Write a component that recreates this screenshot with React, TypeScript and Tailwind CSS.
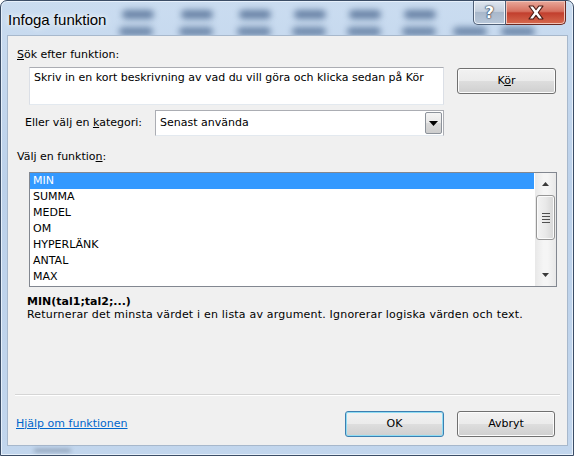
import React from 'react';

const functions = ['MIN', 'SUMMA', 'MEDEL', 'OM', 'HYPERLÄNK', 'ANTAL', 'MAX'];

// blurred spreadsheet cells seen through the glass title bar
const blobsTop = [121, 180, 238, 293, 348, 403];
const blobsBottom = [118, 178, 236, 291, 346, 401, 452, 500];

const Button = ({
  children,
  isDefault,
  className,
}: {
  children: React.ReactNode;
  isDefault?: boolean;
  className?: string;
}) => (
  <div
    className={`h-[26px] rounded-[3px] border flex items-center justify-center text-[11px] text-black bg-[linear-gradient(#f2f2f2_0%,#ebebeb_48%,#dddddd_52%,#cfcfcf_100%)] ${
      isDefault
        ? 'border-[#3c7fb1] shadow-[inset_0_0_0_1px_#8fdcf3]'
        : 'border-[#707070] shadow-[inset_0_0_0_1px_#fcfcfc]'
    } ${className ?? ''}`}
  >
    {children}
  </div>
);

const Triangle = ({ down }: { down?: boolean }) => (
  <svg width="7" height="4" viewBox="0 0 7 4">
    {down ? <path d="M0 0h7L3.5 4z" fill="#3b3b3b" /> : <path d="M0 4h7L3.5 0z" fill="#3b3b3b" />}
  </svg>
);

const App = () => {
  return (
    <div className="w-[574px] h-[456px] bg-white font-['DejaVu_Sans',Tahoma,sans-serif] text-[11px] text-black overflow-hidden">
      <div className="w-full h-full flex flex-col border border-[#3b4d66] rounded-t-[7px] bg-[linear-gradient(#cadcf0,#bcd1ea_40%,#c2d6ed)] shadow-[inset_0_0_0_1px_#e6f0fb]">
        {/* title bar */}
        <div className="h-[34px] flex items-start relative">
          <div className="absolute inset-0 pointer-events-none">
            {blobsTop.map((x, i) => (
              <div
                key={'t' + i}
                className="absolute top-[9px] h-[9px] w-[32px] rounded-full bg-[#34537e]/65 blur-[3px]"
                style={{ left: x }}
              />
            ))}
            {blobsBottom.map((x, i) => (
              <div
                key={'b' + i}
                className="absolute top-[26px] h-[9px] w-[34px] rounded-full bg-[#34537e]/60 blur-[3px]"
                style={{ left: x }}
              />
            ))}
          </div>
          <span className="relative ml-[7px] mt-[10px] font-['Liberation_Sans',Arial,sans-serif] text-[15px] leading-[18px] [text-shadow:0_0_8px_#fff,0_0_4px_#fff]">
            Infoga funktion
          </span>
          <div className="relative ml-auto mr-[7px] flex">
            <div className="w-[33px] h-[24px] border border-[#4f5f76] border-t-0 rounded-bl-[5px] bg-[linear-gradient(#dfe6ef,#c4cfdd_45%,#a9b8cb_50%,#b8c7d9)] shadow-[inset_0_0_0_1px_#eef3f9] flex items-center justify-center">
              <span className="font-bold text-[16px] leading-none text-white [text-shadow:0_0_1px_#2d3a4c,0_0_1px_#2d3a4c,0_0_2px_#2d3a4c]">
                ?
              </span>
            </div>
            <div className="w-[60px] h-[24px] border border-[#6b2820] border-t-0 border-l-0 rounded-br-[5px] bg-[linear-gradient(#e9a99b,#d6705f_45%,#c23f2e_52%,#d66a4f)] shadow-[inset_0_0_0_1px_#f1c3b8] flex items-center justify-center">
              <svg width="18" height="15" viewBox="0 0 16 14">
                <path
                  d="M1.5 1h4l2.5 3.4L10.5 1h4l-4.4 6 4.4 6h-4L8 9.6 5.5 13h-4l4.4-6z"
                  fill="#fff"
                  stroke="#4a1d16"
                  strokeWidth="1"
                  strokeLinejoin="round"
                />
              </svg>
            </div>
          </div>
        </div>

        {/* client area */}
        <div className="relative ml-[6px] mr-[5px] flex-1 border border-[#a7b8cc] bg-[#f0f0f0] flex flex-col">
          <div className="mt-[12px] ml-[9px] h-[13px] leading-[13px]">
            <span className="underline">S</span>ök efter funktion:
          </div>

          <div className="mt-[6px] ml-[21px] flex items-start">
            <div className="w-[415px] h-[38px] bg-white border border-[#abadb3] border-l-[#dbdfe6] border-r-[#dbdfe6] border-b-[#e3e9ef] px-[4px] pt-[3px] leading-[13px] whitespace-nowrap overflow-hidden">
              Skriv in en kort beskrivning av vad du vill göra och klicka sedan på Kör
            </div>
            <Button className="ml-[13px] mt-[1px] w-[99px]">
              <span>
                K<span className="underline">ö</span>r
              </span>
            </Button>
          </div>

          <div className="mt-[5px] ml-[17px] flex items-center h-[26px]">
            <div className="w-[130px] whitespace-nowrap">
              Eller välj en <span className="underline">k</span>ategori:
            </div>
            <div className="w-[289px] h-[26px] bg-white border border-[#abadb3] border-b-[#e3e9ef] flex items-center pl-[4px]">
              <span className="flex-1">Senast använda</span>
              <div className="w-[17px] h-[22px] mr-[1px] border border-[#8d939b] rounded-[2px] bg-[linear-gradient(#f4f4f4,#e8e8e8_50%,#d9d9d9_51%,#cdcdcd)] flex items-center justify-center">
                <svg width="9" height="5" viewBox="0 0 9 5">
                  <path d="M0 0h9L4.5 5z" fill="#000" />
                </svg>
              </div>
            </div>
          </div>

          <div className="mt-[14px] ml-[9px] h-[13px] leading-[13px]">
            Välj en funktio<span className="underline">n</span>:
          </div>

          <div className="mt-[9px] ml-[21px] w-[528px] h-[115px] bg-white border border-[#828790] flex">
            <div className="flex-1 pr-[1px]">
              {functions.map((f, i) => (
                <div
                  key={f}
                  className={`h-[16px] leading-[16px] pl-[3px] ${i === 0 ? 'bg-[#3399ff] text-white' : ''}`}
                >
                  {f}
                </div>
              ))}
            </div>
            <div className="w-[21px] h-full flex flex-col bg-[linear-gradient(90deg,#e8e8e8,#f5f5f5_40%,#f5f5f5_60%,#e8e8e8)]">
              <div className="h-[22px] flex items-center justify-center">
                <Triangle />
              </div>
              <div className="mx-[1px] h-[45px] border border-[#979797] rounded-[3px] bg-[linear-gradient(90deg,#f3f3f3,#e9e9e9_50%,#d6d6d6)] shadow-[inset_0_0_0_1px_#fbfbfb] flex flex-col items-center justify-center gap-[2px]">
                <div className="w-[8px] h-px bg-[#505050]" />
                <div className="w-[8px] h-px bg-[#505050]" />
                <div className="w-[8px] h-px bg-[#505050]" />
                <div className="w-[8px] h-px bg-[#505050]" />
              </div>
              <div className="flex-1" />
              <div className="h-[22px] flex items-center justify-center">
                <Triangle down />
              </div>
            </div>
          </div>

          <div className="mt-[8px] ml-[19px] h-[13px] leading-[13px] font-bold">MIN(tal1;tal2;...)</div>
          <div className="ml-[19px] h-[13px] leading-[13px] whitespace-nowrap tracking-[0.2px]">
            Returnerar det minsta värdet i en lista av argument. Ignorerar logiska värden och text.
          </div>

          <div className="mt-[73px] ml-[7px] w-[545px] h-[2px] border-t border-[#d5d5d5] border-b border-b-white" />

          <div className="mt-[15px] ml-[8px] flex items-center">
            <span className="text-[#0066cc] underline w-[329px]">Hjälp om funktionen</span>
            <Button isDefault className="w-[99px]">
              OK
            </Button>
            <Button className="ml-[13px] w-[98px]">Avbryt</Button>
          </div>
        </div>

        {/* bottom frame */}
        <div className="h-[9px] flex items-center">
          <div className="ml-[33px] w-[37px] h-[3px] rounded-full bg-[#4a5a70]/50 blur-[2px]" />
        </div>
      </div>
    </div>
  );
};

export default App;
